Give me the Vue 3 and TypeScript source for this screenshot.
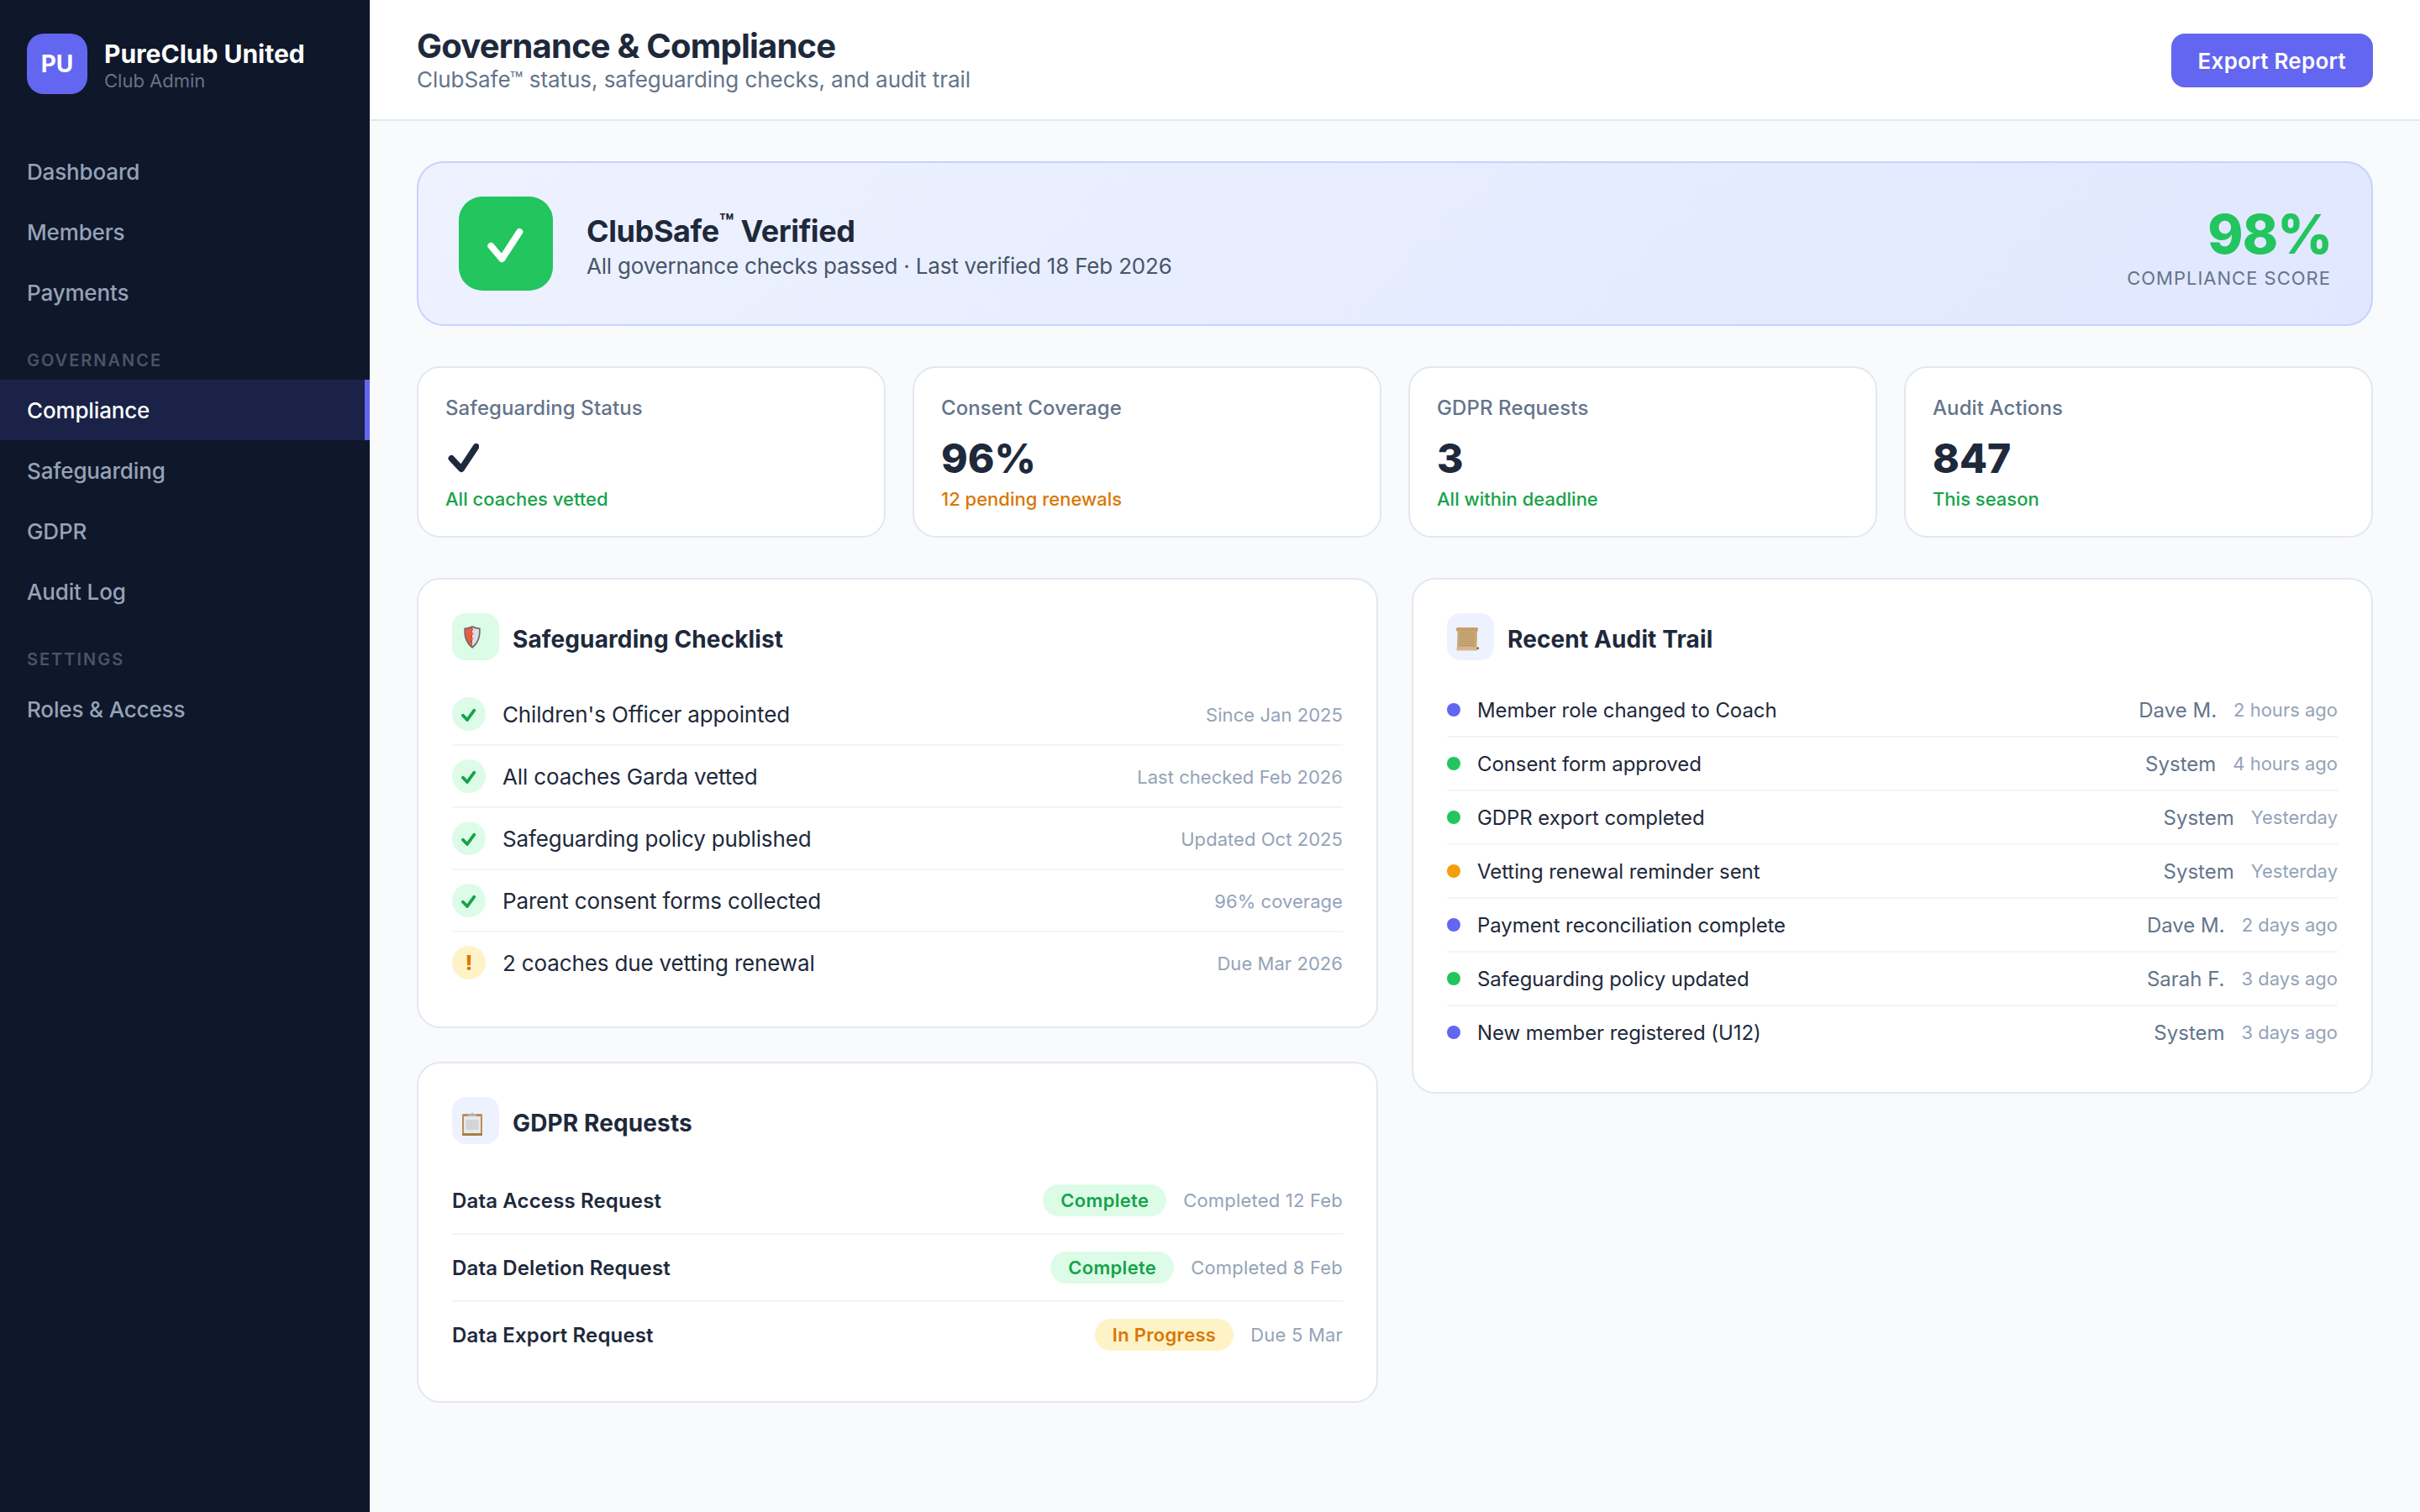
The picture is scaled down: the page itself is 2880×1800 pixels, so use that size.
<template>
  <div class="app">
    <aside class="sidebar">
      <div class="brand">
        <div class="logo">PU</div>
        <div class="brand-text">
          <div class="brand-name">PureClub United</div>
          <div class="brand-role">Club Admin</div>
        </div>
      </div>
      <nav class="nav">
        <template v-for="group in navGroups" :key="group.title">
          <div v-if="group.title" class="nav-title">{{ group.title }}</div>
          <a v-for="item in group.items" :key="item" class="nav-item" :class="{ active: item === 'Compliance' }">{{ item }}</a>
        </template>
      </nav>
    </aside>

    <div class="main">
      <header class="topbar">
        <div>
          <h1>Governance &amp; Compliance</h1>
          <p>ClubSafe™ status, safeguarding checks, and audit trail</p>
        </div>
        <button class="export">Export Report</button>
      </header>

      <div class="content">
        <section class="banner">
          <div class="banner-icon">
            <svg width="48" height="48" viewBox="0 0 48 48"><path d="M6.300 26.700 L19.300 42.300 L40.300 10" fill="none" stroke="#fff" stroke-width="8" stroke-linecap="round" stroke-linejoin="round" /></svg>
          </div>
          <div class="banner-text">
            <h2>ClubSafe<sup>™</sup> Verified</h2>
            <p>All governance checks passed · Last verified 18 Feb 2026</p>
          </div>
          <div class="score">
            <div class="score-value">98%</div>
            <div class="score-label">COMPLIANCE SCORE</div>
          </div>
        </section>

        <section class="stats">
          <div v-for="stat in stats" :key="stat.label" class="stat">
            <div class="stat-label">{{ stat.label }}</div>
            <div class="stat-value">
              <svg v-if="stat.value === 'check'" class="stat-check" width="40" height="40" viewBox="0 0 40 40"><path d="M7.300 20.700 L19 33.300 L36.700 6.700" fill="none" stroke="#1e293b" stroke-width="7.500" stroke-linecap="round" stroke-linejoin="round" /></svg>
              <template v-else>{{ stat.value }}</template>
            </div>
            <div class="stat-sub" :class="stat.tone">{{ stat.sub }}</div>
          </div>
        </section>

        <div class="columns">
          <div class="col">
            <section class="card">
              <div class="card-head">
                <span class="head-icon green">
                  <svg class="emoji shield" width="20" height="27" viewBox="0 0 20 27">
                    <path d="M10 0 C13 1.500 16.500 2.300 19.500 2.500 C20.500 12 18 21 10 27 C2 21 -0.500 12 0.500 2.500 C3.500 2.300 7 1.500 10 0Z" fill="#6f6a68" />
                    <path d="M10 2 C12.500 3.200 15.500 3.900 18 4.100 C18.500 12 16.500 19.500 10 24.500Z" fill="#dcdee2" />
                    <path d="M10 2 C7.500 3.200 4.500 3.900 2 4.100 C1.500 12 3.500 19.500 10 24.500 L10 21 L7.500 18.500 L11.500 15.500 L8 12.500 L12 9.500 L9 7 L11.500 4.500Z" fill="#ea5b41" />
                  </svg>
                </span>
                <h3>Safeguarding Checklist</h3>
              </div>
              <div v-for="row in checklist" :key="row.text" class="check-row">
                <span class="check-icon" :class="{ warn: row.warn }">
                  <svg v-if="!row.warn" width="20" height="18" viewBox="0 0 20 18"><path d="M3 10.700 L8 16 L16.300 4.700" fill="none" stroke="#16a34a" stroke-width="3.800" stroke-linecap="round" stroke-linejoin="round" /></svg>
                  <template v-else>!</template>
                </span>
                <span class="check-text">{{ row.text }}</span>
                <span class="muted">{{ row.note }}</span>
              </div>
            </section>

            <section class="card">
              <div class="card-head">
                <span class="head-icon indigo">
                  <svg class="emoji clipboard" width="24" height="29" viewBox="0 0 24 29">
                    <rect x="0" y="3" width="24" height="26" rx="1.500" fill="#b88f54" />
                    <rect x="2" y="6" width="20" height="20" fill="#e8e8e8" />
                    <rect x="4.500" y="10" width="15" height="12" fill="#d4d4d4" />
                    <rect x="0" y="26.500" width="24" height="2.500" rx="1" fill="#a57a42" />
                    <path d="M7 6 L7 3.500 L10 3.500 Q12 -0.500 14 3.500 L17 3.500 L17 6Z" fill="#aeb8c4" />
                  </svg>
                </span>
                <h3>GDPR Requests</h3>
              </div>
              <div v-for="req in requests" :key="req.name" class="req-row">
                <span class="req-name">{{ req.name }}</span>
                <span class="pill" :class="req.tone">{{ req.status }}</span>
                <span class="muted">{{ req.date }}</span>
              </div>
            </section>
          </div>

          <div class="col">
            <section class="card">
              <div class="card-head">
                <span class="head-icon indigo">
                  <svg class="emoji scroll" width="27" height="28" viewBox="0 0 27 28">
                    <path d="M1.500 3 L25 3 L24.500 24 L1 24.500Z" fill="#c8a878" />
                    <path d="M4 6.500 H22 M4 9 H22 M4 11.500 H22 M4 14 H22 M4 16.500 H22 M4 19 H22 M4 21.500 H22" stroke="#b5915f" stroke-width="0.700" />
                    <rect x="0" y="0" width="26" height="4.500" rx="1.500" fill="#c69f66" />
                    <rect x="0.500" y="23" width="25" height="4.500" rx="1.500" fill="#d4b78d" />
                    <rect x="24.500" y="23.500" width="2.500" height="2.500" fill="#8d6a3c" />
                  </svg>
                </span>
                <h3>Recent Audit Trail</h3>
              </div>
              <div v-for="entry in audit" :key="entry.text" class="audit-row">
                <span class="dot" :class="entry.tone"></span>
                <span class="audit-text">{{ entry.text }}</span>
                <span class="audit-who">{{ entry.who }}</span>
                <span class="muted">{{ entry.when }}</span>
              </div>
            </section>
          </div>
        </div>
      </div>
    </div>
  </div>
</template>

<script setup lang="ts">
interface NavGroup {
  title: string
  items: string[]
}

const navGroups: NavGroup[] = [
  { title: '', items: ['Dashboard', 'Members', 'Payments'] },
  { title: 'GOVERNANCE', items: ['Compliance', 'Safeguarding', 'GDPR', 'Audit Log'] },
  { title: 'SETTINGS', items: ['Roles & Access'] },
]

const stats = [
  { label: 'Safeguarding Status', value: 'check', sub: 'All coaches vetted', tone: 'good' },
  { label: 'Consent Coverage', value: '96%', sub: '12 pending renewals', tone: 'warn' },
  { label: 'GDPR Requests', value: '3', sub: 'All within deadline', tone: 'good' },
  { label: 'Audit Actions', value: '847', sub: 'This season', tone: 'good' },
]

const checklist = [
  { text: "Children's Officer appointed", note: 'Since Jan 2025', warn: false },
  { text: 'All coaches Garda vetted', note: 'Last checked Feb 2026', warn: false },
  { text: 'Safeguarding policy published', note: 'Updated Oct 2025', warn: false },
  { text: 'Parent consent forms collected', note: '96% coverage', warn: false },
  { text: '2 coaches due vetting renewal', note: 'Due Mar 2026', warn: true },
]

const requests = [
  { name: 'Data Access Request', status: 'Complete', tone: 'done', date: 'Completed 12 Feb' },
  { name: 'Data Deletion Request', status: 'Complete', tone: 'done', date: 'Completed 8 Feb' },
  { name: 'Data Export Request', status: 'In Progress', tone: 'progress', date: 'Due 5 Mar' },
]

const audit = [
  { text: 'Member role changed to Coach', who: 'Dave M.', when: '2 hours ago', tone: 'indigo' },
  { text: 'Consent form approved', who: 'System', when: '4 hours ago', tone: 'green' },
  { text: 'GDPR export completed', who: 'System', when: 'Yesterday', tone: 'green' },
  { text: 'Vetting renewal reminder sent', who: 'System', when: 'Yesterday', tone: 'amber' },
  { text: 'Payment reconciliation complete', who: 'Dave M.', when: '2 days ago', tone: 'indigo' },
  { text: 'Safeguarding policy updated', who: 'Sarah F.', when: '3 days ago', tone: 'green' },
  { text: 'New member registered (U12)', who: 'System', when: '3 days ago', tone: 'indigo' },
]
</script>

<style>
html,
body {
  margin: 0;
  background: #f8fafc;
}
</style>

<style scoped>
.app {
  display: flex;
  min-height: 1800px;
  font-family: Inter, 'Liberation Sans', sans-serif;
  color: #1e293b;
}

.sidebar {
  width: 440px;
  flex-shrink: 0;
  background: #0f172a;
}

.brand {
  display: flex;
  align-items: center;
  gap: 20px;
  padding: 40px 32px 0;
}

.brand-text {
  padding-top: 2px;
}

.logo {
  width: 72px;
  height: 72px;
  border-radius: 20px;
  background: #6366f1;
  color: #fff;
  font-size: 28px;
  font-weight: 700;
  display: flex;
  align-items: center;
  justify-content: center;
}

.brand-name {
  font-size: 30px;
  line-height: 38px;
  font-weight: 700;
  color: #fff;
}

.brand-role {
  font-size: 22px;
  line-height: 26px;
  color: #64748b;
}

.nav {
  padding-top: 56px;
}

.nav-item {
  display: flex;
  align-items: center;
  height: 72px;
  padding: 0 32px;
  font-size: 26px;
  letter-spacing: -0.15px;
  font-weight: 500;
  color: #94a3b8;
  box-sizing: border-box;
}

.nav-item.active {
  background: #1a2248;
  color: #fff;
  border-right: 6px solid #6366f1;
}

.nav-title {
  padding: 33px 32px 11px;
  font-size: 20px;
  line-height: 24px;
  font-weight: 600;
  letter-spacing: 2px;
  color: #475569;
}

.main {
  flex: 1;
  min-width: 0;
}

.topbar {
  height: 144px;
  box-sizing: border-box;
  background: #fff;
  border-bottom: 2px solid #e2e8f0;
  padding: 0 56px;
  display: flex;
  align-items: center;
  justify-content: space-between;
}

.topbar h1 {
  margin: 0;
  font-size: 40px;
  line-height: 46px;
  font-weight: 700;
  letter-spacing: -0.8px;
}

.topbar p {
  margin: 1px 0 0;
  font-size: 26px;
  line-height: 32px;
  letter-spacing: -0.05px;
  color: #64748b;
}

.export {
  height: 64px;
  margin-top: 2px;
  padding: 0 32px;
  border: none;
  border-radius: 16px;
  background: #6366f1;
  color: #fff;
  font-family: inherit;
  font-size: 26px;
  letter-spacing: 0.25px;
  font-weight: 600;
}

.content {
  padding: 48px 56px;
}

.banner {
  display: flex;
  align-items: center;
  gap: 40px;
  padding: 40px 48px;
  border: 2px solid #c7d2fe;
  border-radius: 32px;
  background: linear-gradient(135deg, #eef2ff, #e0e7ff);
}

.banner-icon {
  width: 112px;
  height: 112px;
  border-radius: 28px;
  background: #22c55e;
  display: flex;
  align-items: center;
  justify-content: center;
}

.banner-text {
  flex: 1;
}

.banner-text h2 {
  margin: 0;
  padding-top: 8px;
  font-size: 36px;
  line-height: 44px;
  letter-spacing: -0.4px;
  font-weight: 700;
}

.banner-text sup {
  font-size: 28px;
  line-height: 0;
}

.banner-text p {
  margin: 2px 0 0;
  font-size: 26px;
  line-height: 36px;
  letter-spacing: -0.2px;
  color: #475569;
}

.score {
  text-align: right;
  padding-top: 8px;
}

.score-value {
  font-size: 64px;
  line-height: 72px;
  letter-spacing: -1px;
  margin-right: -1px;
  font-weight: 800;
  color: #22c55e;
}

.score-label {
  margin-top: 2px;
  font-size: 22px;
  line-height: 28px;
  letter-spacing: 1px;
  color: #64748b;
}

.stats {
  display: grid;
  grid-template-columns: repeat(4, 1fr);
  gap: 32px;
  margin-top: 48px;
}

.stat {
  height: 204px;
  box-sizing: border-box;
  padding: 32px;
  background: #fff;
  border: 2px solid #e2e8f0;
  border-radius: 28px;
}

.stat-label {
  font-size: 24px;
  line-height: 32px;
  letter-spacing: 0.1px;
  font-weight: 500;
  color: #64748b;
}

.stat-value {
  margin-top: 10px;
  height: 68px;
  font-size: 48px;
  line-height: 68px;
  font-weight: 800;
  color: #1e293b;
}

.stat-check {
  display: block;
  padding-top: 13px;
}

.stat-sub {
  padding-top: 1px;
  font-size: 22px;
  line-height: 26px;
  font-weight: 500;
}

.stat-sub.good {
  color: #16a34a;
}

.stat-sub.warn {
  color: #d97706;
}

.columns {
  display: grid;
  grid-template-columns: 1fr 1fr;
  gap: 40px;
  margin-top: 48px;
  align-items: start;
}

.col {
  display: flex;
  flex-direction: column;
  gap: 40px;
}

.card {
  padding: 40px;
  background: #fff;
  border: 2px solid #e2e8f0;
  border-radius: 28px;
}

.card-head {
  display: flex;
  align-items: center;
  gap: 16px;
  margin-bottom: 28px;
}

.card-head h3 {
  margin: 0;
  padding-top: 6px;
  font-size: 28px;
  letter-spacing: 0.12px;
  font-weight: 700;
}

.head-icon {
  width: 56px;
  height: 56px;
  border-radius: 16px;
  display: flex;
  align-items: center;
  justify-content: center;
}

.head-icon.green {
  background: #dcfce7;
}

.head-icon.indigo {
  background: #eef2ff;
}

.emoji {
  margin-right: 8px;
}

.emoji.clipboard {
  margin-top: 6px;
}

.emoji.scroll {
  margin-top: 5px;
}

.check-row {
  display: flex;
  align-items: center;
  gap: 20px;
  padding: 16px 0;
  border-bottom: 2px solid #f1f5f9;
}

.check-row:last-child,
.req-row:last-child,
.audit-row:last-child {
  border-bottom: none;
}

.check-icon {
  width: 40px;
  height: 40px;
  border-radius: 50%;
  background: #dcfce7;
  display: flex;
  align-items: center;
  justify-content: center;
  flex-shrink: 0;
}

.check-icon.warn {
  background: #fef3c7;
  color: #d97706;
  font-size: 24px;
  font-weight: 800;
}

.check-text {
  flex: 1;
  padding-top: 2px;
  font-size: 26px;
  line-height: 34px;
  letter-spacing: -0.15px;
}

.muted {
  font-size: 22px;
  color: #94a3b8;
  white-space: nowrap;
}

.check-row .muted {
  padding-top: 2px;
  letter-spacing: 0.05px;
}

.req-row .muted {
  letter-spacing: 0.2px;
}

.req-row {
  display: flex;
  align-items: center;
  gap: 20px;
  padding: 20px 0;
  border-bottom: 2px solid #f1f5f9;
}

.req-name {
  flex: 1;
  font-size: 24px;
  letter-spacing: 0.15px;
  font-weight: 600;
}

.pill {
  height: 38px;
  padding: 0 21px;
  border-radius: 19px;
  font-size: 22px;
  letter-spacing: 0.3px;
  font-weight: 600;
  display: flex;
  align-items: center;
}

.pill.done {
  background: #dcfce7;
  color: #16a34a;
}

.pill.progress {
  background: #fef3c7;
  color: #d97706;
}

.audit-row {
  display: flex;
  align-items: center;
  height: 64px;
  box-sizing: border-box;
  gap: 20px;
  border-bottom: 2px solid #f1f5f9;
}

.audit-row:last-child {
  height: 62px;
}

.dot {
  width: 16px;
  height: 16px;
  border-radius: 50%;
  flex-shrink: 0;
}

.dot.indigo {
  background: #6366f1;
}

.dot.green {
  background: #22c55e;
}

.dot.amber {
  background: #f59e0b;
}

.audit-text {
  flex: 1;
  font-size: 24px;
  letter-spacing: -0.08px;
}

.audit-who {
  font-size: 24px;
  color: #64748b;
}
</style>
